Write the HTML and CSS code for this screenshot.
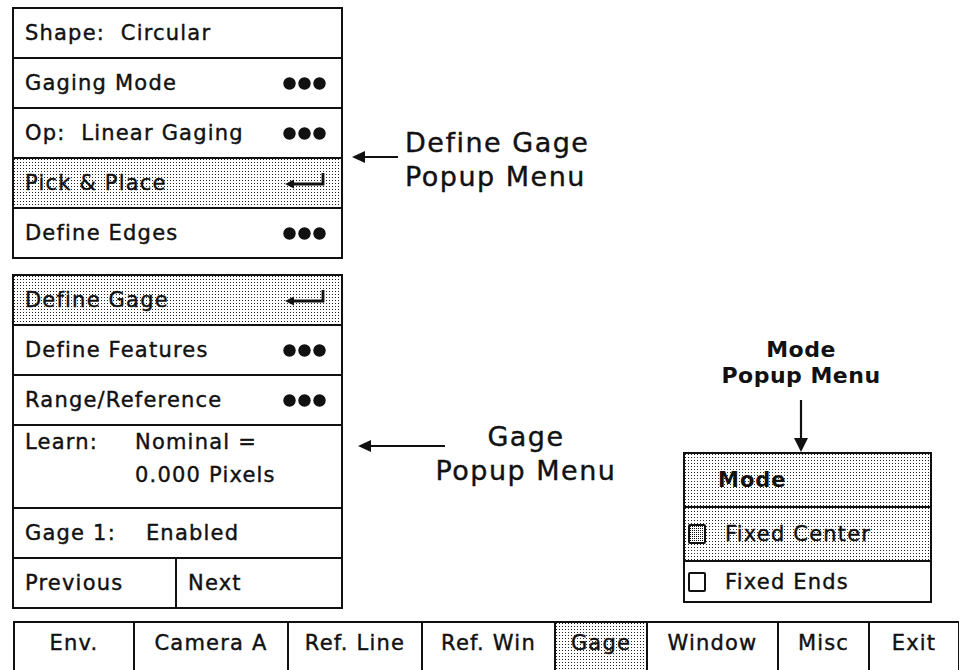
FILE: index.html
```html
<!DOCTYPE html>
<html lang="en">
<head>
    <meta charset="UTF-8">
    <title>Gage Setup</title>
    <link rel="stylesheet" href="styles.css">
</head>
<body>
    <svg class="defs" width="0" height="0">
        <symbol id="dots" viewBox="0 0 43 13">
            <circle cx="6.5" cy="6.5" r="6.2"/>
            <circle cx="21.5" cy="6.5" r="6.2"/>
            <circle cx="36.5" cy="6.5" r="6.2"/>
        </symbol>
        <symbol id="enter" viewBox="0 0 42 20">
            <path d="M39 3V14H6" fill="none" stroke="#111" stroke-width="2.8"/>
            <path d="M1 14L10 9.5V18.5Z" fill="#111"/>
        </symbol>
    </svg>

    <div class="screen">
        <div class="upper">
            <div class="menus">
                <!-- define gage popup -->
                <div class="menu">
                    <div class="item">Shape:&nbsp; Circular</div>
                    <div class="item">Gaging Mode <svg class="dots"><use href="#dots"/></svg></div>
                    <div class="item">Op:&nbsp; Linear Gaging <svg class="dots"><use href="#dots"/></svg></div>
                    <div class="item hatch">Pick &amp; Place <svg class="enter"><use href="#enter"/></svg></div>
                    <div class="item">Define Edges <svg class="dots"><use href="#dots"/></svg></div>
                </div>

                <!-- gage popup -->
                <div class="menu">
                    <div class="item hatch">Define Gage <svg class="enter"><use href="#enter"/></svg></div>
                    <div class="item">Define Features <svg class="dots"><use href="#dots"/></svg></div>
                    <div class="item">Range/Reference <svg class="dots"><use href="#dots"/></svg></div>
                    <div class="item learn">
                        <span class="learn-key">Learn:</span>
                        <span class="learn-val">Nominal =<br>0.000 Pixels</span>
                    </div>
                    <div class="item"><span>Gage 1:<span class="val">Enabled</span></span></div>
                    <div class="item split">
                        <div class="half">Previous</div>
                        <div class="half">Next</div>
                    </div>
                </div>
            </div>

            <div class="notes">
                <div class="note note-define">
                    <svg class="arrow-left" width="46" height="14"><path d="M46 7H10" stroke="#111" stroke-width="2.2"/><path d="M0 7L13 1V13Z" fill="#111"/></svg>
                    <div class="note-text">Define Gage<br>Popup Menu</div>
                </div>
                <div class="note note-gage">
                    <svg class="arrow-left" width="87" height="14"><path d="M87 7H10" stroke="#111" stroke-width="2.2"/><path d="M0 7L13 1V13Z" fill="#111"/></svg>
                    <div class="note-text centered">Gage<br>Popup Menu</div>
                </div>
            </div>

            <div class="mode-area">
                <div class="mode-head">
                    <div class="mode-title">Mode<br>Popup Menu</div>
                    <svg class="arrow-down" width="14" height="52"><path d="M7 0V40" stroke="#111" stroke-width="2.2"/><path d="M0 38H14L7 52Z" fill="#111"/></svg>
                </div>
                <div class="menu mode-menu">
                    <div class="item hatch mode-name">Mode</div>
                    <div class="item hatch"><span class="check"><span class="box on"></span>Fixed Center</span></div>
                    <div class="item"><span class="check"><span class="box"></span>Fixed Ends</span></div>
                </div>
            </div>
        </div>

        <div class="tabbar">
            <div class="tab">Env.</div>
            <div class="tab">Camera A</div>
            <div class="tab">Ref. Line</div>
            <div class="tab">Ref. Win</div>
            <div class="tab hatch">Gage</div>
            <div class="tab">Window</div>
            <div class="tab">Misc</div>
            <div class="tab">Exit</div>
        </div>
    </div>
</body>
</html>
```

FILE: styles.css
```css
* { box-sizing: border-box; }
body { margin: 0; background: #fff; color: #111; font-family: "DejaVu Sans", Verdana, sans-serif; font-size: 21px; letter-spacing: 1.2px; -webkit-text-stroke: 0.4px #111; overflow: hidden; }
.defs { position: absolute; }
.screen { width: 959px; height: 670px; padding-top: 7px; overflow: hidden; }
.upper { display: flex; height: 603px; }

/* popup menus */
.menus { margin-left: 12px; width: 331px; display: flex; flex-direction: column; gap: 15px; }
.menu { border: 2px solid #111; background: #fff; }
.item { display: flex; align-items: center; justify-content: space-between; height: 50px; padding: 0 15px 0 11px; border-bottom: 2px solid #111; }
.item:last-child { border-bottom: 0; height: 48px; }
.hatch { background-color: #fff; background-image: conic-gradient(from 270deg at 1px 1px, #222 25%, transparent 0); background-size: 3px 3px; }
.dots { width: 43px; height: 13px; fill: #111; flex: none; }
.enter { width: 42px; height: 20px; margin-top: -6px; flex: none; }
.learn { height: 83px; align-items: flex-start; justify-content: flex-start; line-height: 33px; }
.learn-key { width: 110px; }
.val { margin-left: 30px; }
.split { padding: 0; justify-content: flex-start; }
.half { height: 100%; display: flex; align-items: center; padding-left: 11px; }
.half:first-child { width: 163px; border-right: 2px solid #111; }
.half:last-child { flex: 1; }

/* callouts */
.notes { width: 340px; margin-left: 9px; display: flex; flex-direction: column; }
.note { display: flex; align-items: flex-start; }
.note-text { font-size: 27px; letter-spacing: 1.5px; line-height: 34px; }
.note-text.centered { text-align: center; }
.note-define { margin-top: 119px; gap: 7px; }
.note-define .arrow-left { margin-top: 24px; }
.note-gage { margin-top: 226px; margin-left: 6px; gap: 0; }
.note-gage .arrow-left { margin-top: 19px; margin-right: -32px; }
.note-gage .note-text { width: 226px; }

/* mode popup */
.mode-area { width: 249px; margin-left: -9px; display: flex; flex-direction: column; }
.mode-head { width: 236px; margin-top: 330px; display: flex; flex-direction: column; align-items: center; }
.mode-title { font-weight: bold; font-size: 22px; letter-spacing: 0.5px; line-height: 26px; text-align: center; -webkit-text-stroke: 0; }
.arrow-down { margin-top: 11px; display: block; }
.mode-menu .item { height: 54px; padding-left: 3px; }
.mode-menu .item:last-child { height: 39px; }
.mode-name { font-weight: bold; padding-left: 33px !important; letter-spacing: 1px; -webkit-text-stroke: 0; }
.check { display: flex; align-items: center; }
.box { display: block; flex: none; width: 18px; min-width: 18px; height: 20px; border: 2px solid #111; border-radius: 2px; margin-right: 19px; background: #fff; }
.box.on { background-image: conic-gradient(from 270deg at 1px 1px, #111 25%, transparent 0); background-size: 2px 2px; }

/* bottom tab bar */
.tabbar { margin: 11px 0 0 13px; display: grid; grid-template-columns: 120px 154px 134px 133px 92px 131px 91px 90px; height: 60px; border-top: 2px solid #111; border-left: 2px solid #111; }
.tab { border-right: 2px solid #111; text-align: center; padding-top: 8px; }
```
